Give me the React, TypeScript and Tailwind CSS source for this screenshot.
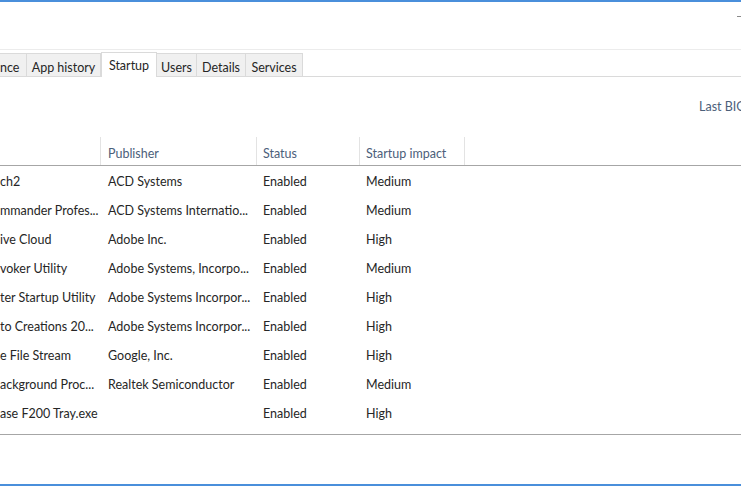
import React from 'react';

const tabs = [
  { label: 'nce', w: 'w-[27px]', clip: true },
  { label: 'App history', w: 'w-[74px]' },
  { label: 'Startup', w: 'w-[56px]', active: true },
  { label: 'Users', w: 'w-[40px]' },
  { label: 'Details', w: 'w-[49px]' },
  { label: 'Services', w: 'w-[57px]' },
];

const rows = [
  ['ch2', 'ACD Systems', 'Enabled', 'Medium'],
  ['mmander Profes...', 'ACD Systems Internatio...', 'Enabled', 'Medium'],
  ['ive Cloud', 'Adobe Inc.', 'Enabled', 'High'],
  ['voker Utility', 'Adobe Systems, Incorpo...', 'Enabled', 'Medium'],
  ['ter Startup Utility', 'Adobe Systems Incorpor...', 'Enabled', 'High'],
  ['to Creations 20...', 'Adobe Systems Incorpor...', 'Enabled', 'High'],
  ['e File Stream', 'Google, Inc.', 'Enabled', 'High'],
  ['ackground Proc...', 'Realtek Semiconductor', 'Enabled', 'Medium'],
  ['ase F200 Tray.exe', '', 'Enabled', 'High'],
];

export default function App() {
  return (
    <div
      className="relative flex h-[486px] w-[741px] flex-col overflow-hidden bg-white text-[12.5px] text-[#262626]"
      style={{ fontFamily: '"Segoe UI", Lato, "Noto Sans", sans-serif' }}
    >
      {/* window top edge */}
      <div className="h-[2px] bg-[#4a8fdb]" />
      <div className="flex h-[47px] justify-end pt-[12px]">
        <div className="h-[1px] w-[4px] translate-y-[2px] bg-[#8a8a8a]" />
      </div>
      <div className="h-[1px] bg-[#ececec]" />

      {/* tab strip */}
      <div className="flex h-[27px] items-end border-b border-[#dadada]">
        {tabs.map((t) =>
          t.active ? (
            <div
              key={t.label}
              className={`${t.w} -mb-[1px] flex h-[25px] items-start justify-center border-x border-t border-[#dadada] bg-white pt-[4px]`}
            >
              {t.label}
            </div>
          ) : (
            <div
              key={t.label}
              className={`${t.w} flex h-[23px] items-start pt-[5px] ${t.clip ? 'justify-start' : 'justify-center'} border-r border-t border-[#dadada] bg-[#f0f0f0]`}
            >
              {t.label}
            </div>
          )
        )}
        <div className="flex-1" />
      </div>

      {/* last bios time */}
      <div className="flex h-[60px] items-start whitespace-nowrap pl-[699px] pt-[21px] text-[#4c607a]">
        Last BIOS time:
      </div>

      {/* table header */}
      <div className="flex h-[29px] border-b border-[#a6a6a6] text-[#4c607a]">
        <div className="w-[101px] border-r border-[#e3e3e3]" />
        <div className="flex w-[156px] items-end border-r border-[#e3e3e3] pb-[1px] pl-[7px]">Publisher</div>
        <div className="flex w-[103px] items-end border-r border-[#e3e3e3] pb-[1px] pl-[6px]">Status</div>
        <div className="flex w-[105px] items-end border-r border-[#e3e3e3] pb-[1px] pl-[6px]">Startup impact</div>
        <div className="flex-1" />
      </div>

      {/* rows */}
      <div className="flex flex-col border-b border-[#a6a6a6] pb-[5px] pt-[2px]">
        {rows.map((r) => (
          <div key={r[0]} className="flex h-[29px] items-center whitespace-nowrap">
            <div className="w-[101px] overflow-hidden">{r[0]}</div>
            <div className="w-[156px] overflow-hidden pl-[7px]">{r[1]}</div>
            <div className="w-[103px] pl-[6px]">{r[2]}</div>
            <div className="w-[105px] pl-[6px]">{r[3]}</div>
          </div>
        ))}
      </div>

      <div className="flex-1" />
      <div className="h-[2px] bg-[#4a8fdb]" />
    </div>
  );
}
